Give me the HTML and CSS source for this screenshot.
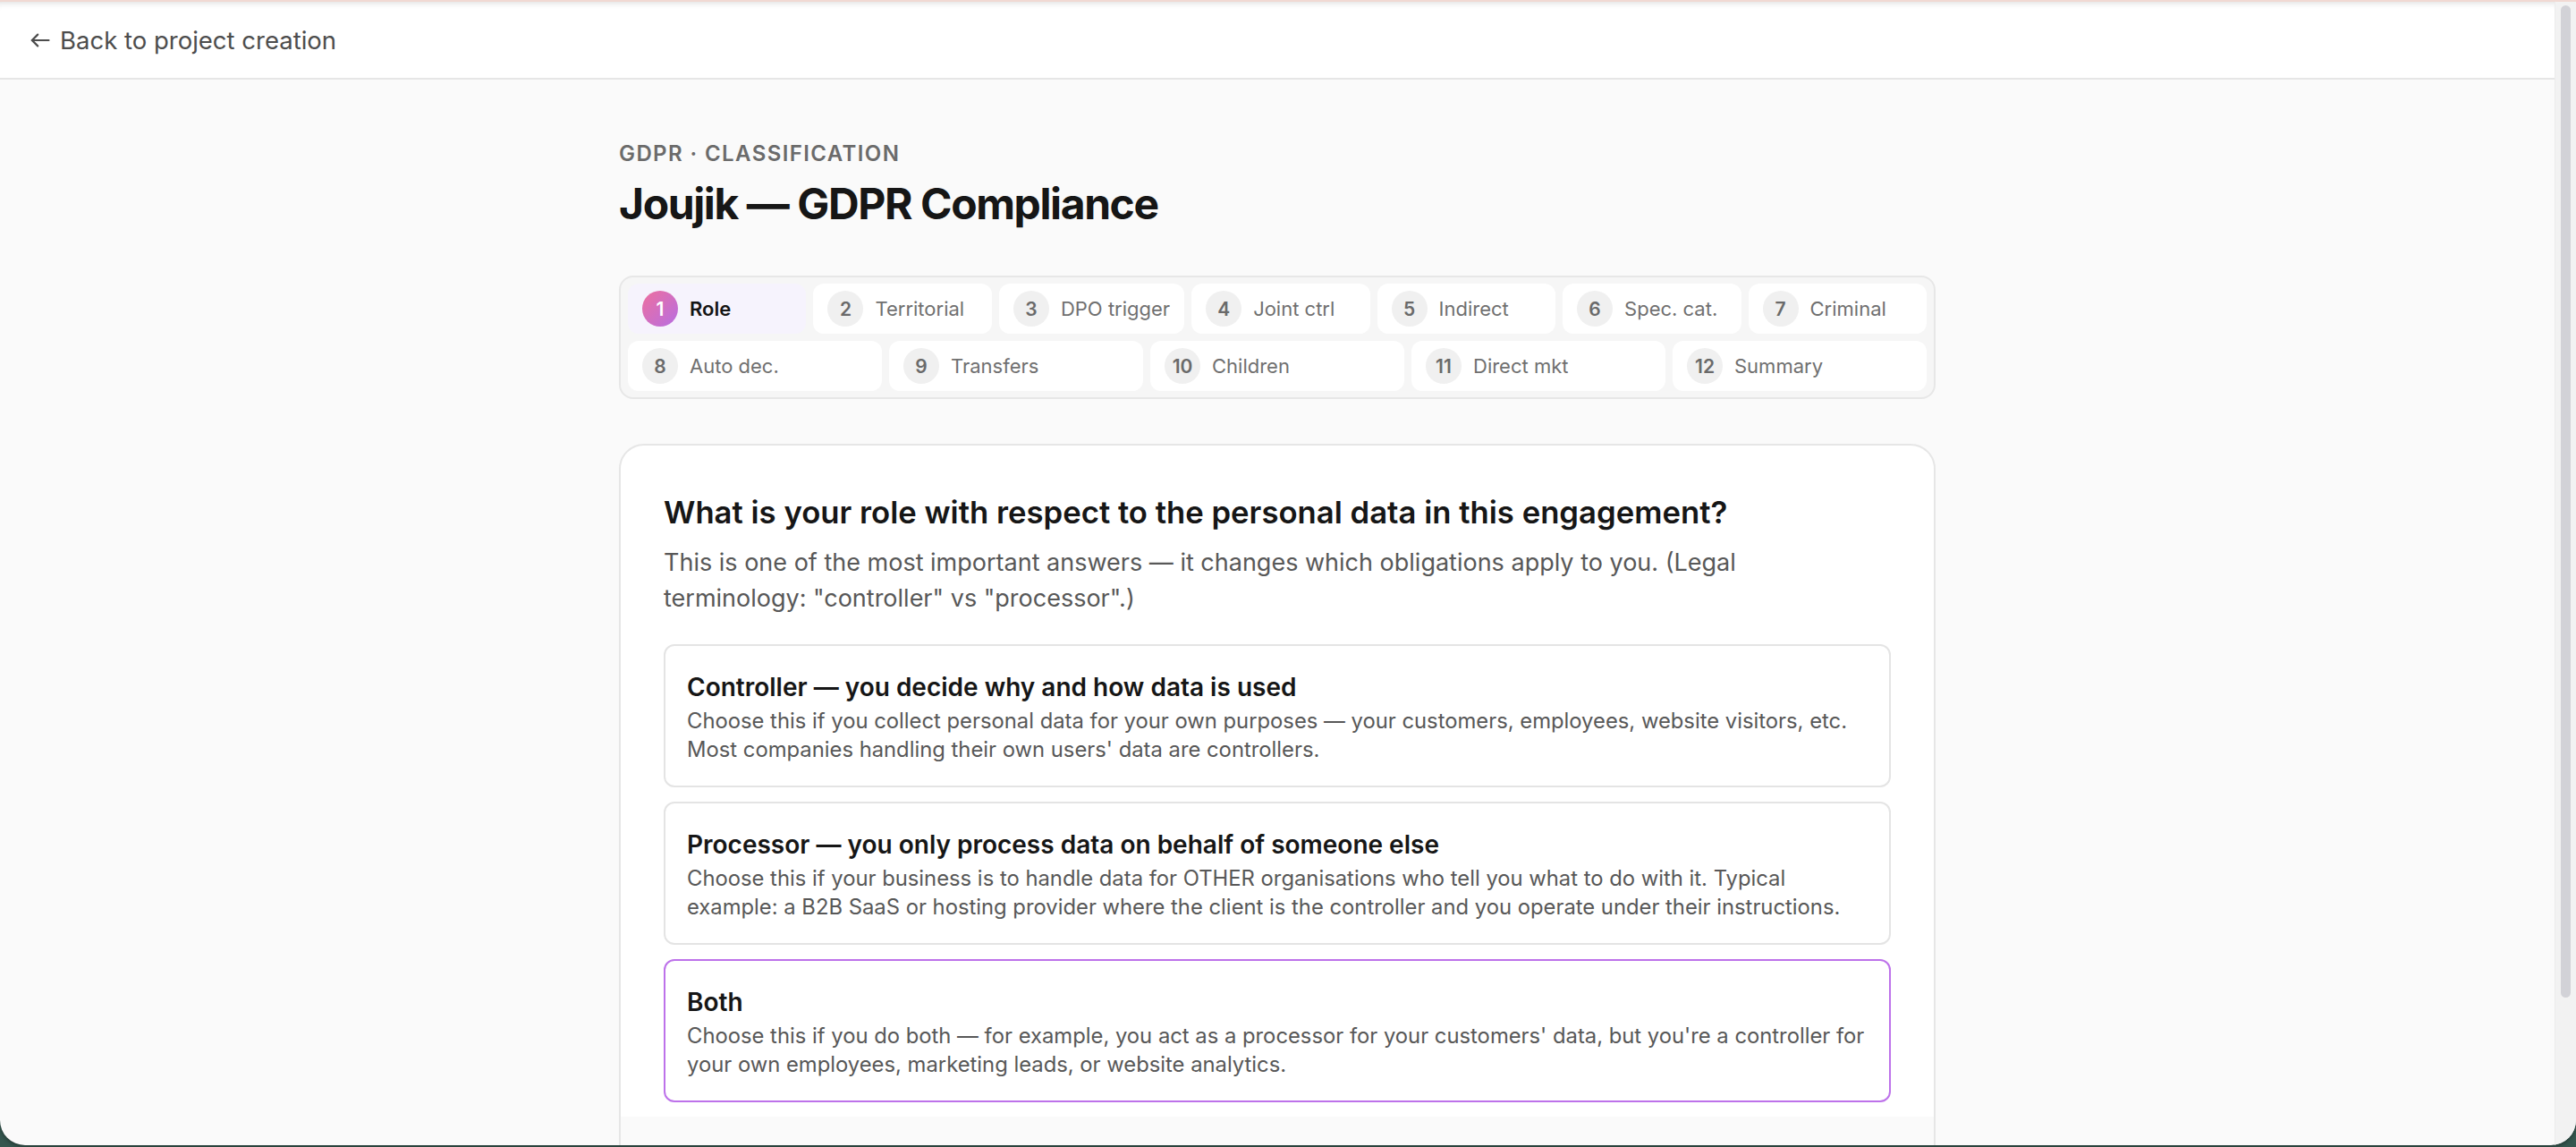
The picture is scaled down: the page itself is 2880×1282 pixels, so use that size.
FILE: index.html
```html
<!DOCTYPE html>
<html lang="en">
<head>
<meta charset="utf-8">
<title>Joujik — GDPR Compliance</title>
<link rel="stylesheet" href="styles.css">
</head>
<body>
<div class="window">
  <div class="viewport">
    <header class="topbar">
      <a class="back-link" href="#">
        <svg class="back-icon" width="22" height="16" viewBox="0 0 22 16" fill="none" stroke="currentColor" stroke-width="2.2" stroke-linecap="round" stroke-linejoin="round"><path d="M20.5 8H1.8"/><path d="M8.2 1.6 1.8 8l6.4 6.4"/></svg>
        <span>Back to project creation</span>
      </a>
    </header>
    <main class="page">
      <div class="eyebrow">GDPR · CLASSIFICATION</div>
      <h1 class="title">Joujik — GDPR Compliance</h1>

      <nav class="steps">
        <div class="step active"><span class="num">1</span><span class="label">Role</span></div>
        <div class="step"><span class="num">2</span><span class="label">Territorial</span></div>
        <div class="step"><span class="num">3</span><span class="label">DPO trigger</span></div>
        <div class="step"><span class="num">4</span><span class="label">Joint ctrl</span></div>
        <div class="step"><span class="num">5</span><span class="label">Indirect</span></div>
        <div class="step"><span class="num">6</span><span class="label">Spec. cat.</span></div>
        <div class="step"><span class="num">7</span><span class="label">Criminal</span></div>
        <div class="step"><span class="num">8</span><span class="label">Auto dec.</span></div>
        <div class="step"><span class="num">9</span><span class="label">Transfers</span></div>
        <div class="step"><span class="num">10</span><span class="label">Children</span></div>
        <div class="step"><span class="num">11</span><span class="label">Direct mkt</span></div>
        <div class="step"><span class="num">12</span><span class="label">Summary</span></div>
      </nav>

      <section class="card">
        <div class="card-body">
          <h2 class="question">What is your role with respect to the personal data in this engagement?</h2>
          <p class="hint">This is one of the most important answers — it changes which obligations apply to you. (Legal terminology: "controller" vs "processor".)</p>
          <div class="options">
            <div class="option">
              <div class="option-title">Controller — you decide why and how data is used</div>
              <div class="option-desc">Choose this if you collect personal data for your own purposes — your customers, employees, website visitors, etc. Most companies handling their own users' data are controllers.</div>
            </div>
            <div class="option">
              <div class="option-title">Processor — you only process data on behalf of someone else</div>
              <div class="option-desc">Choose this if your business is to handle data for OTHER organisations who tell you what to do with it. Typical example: a B2B SaaS or hosting provider where the client is the controller and you operate under their instructions.</div>
            </div>
            <div class="option selected">
              <div class="option-title">Both</div>
              <div class="option-desc">Choose this if you do both — for example, you act as a processor for your customers' data, but you're a controller for your own employees, marketing leads, or website analytics.</div>
            </div>
          </div>
        </div>
        <div class="card-footer">
          <button class="btn-next" type="button">Continue →</button>
        </div>
      </section>
    </main>
  </div>
  <div class="scrollbar"><div class="thumb"></div></div>
</div>
</body>
</html>
```

FILE: styles.css
```css
* { box-sizing: border-box; }

html, body {
  margin: 0;
  padding: 0;
  height: 100%;
  background: #35574f;
}

body {
  font-family: Inter, "Noto Sans", "Liberation Sans", sans-serif;
  color: #1a1a1a;
  overflow: hidden;
}

.window {
  display: flex;
  height: 1280px;
  overflow: hidden;
  background: #fafafa;
  border-radius: 0 0 28px 28px;
  border-top: 2px solid #f1d9d3;
  box-shadow: 0 2px 4px rgba(0,0,0,0.35);
}

.viewport {
  flex: 1;
  min-width: 0;
  overflow: hidden;
}

.scrollbar {
  flex: none;
  width: 24px;
  padding: 4px 6px;
  background: #f2f2f2;
  border-left: 1px solid #ececec;
}

.thumb {
  height: 1109px;
  border-radius: 6px;
  background: #d2d2d7;
}

.topbar {
  height: 87px;
  background: #ffffff;
  border-bottom: 2px solid #e6e6e6;
  display: flex;
  align-items: center;
  padding: 0 34px;
  box-shadow: inset 0 8px 8px -8px rgba(0,0,0,0.18);
}

.back-link {
  display: flex;
  align-items: center;
  gap: 11px;
  color: #4d4d4d;
  text-decoration: none;
  font-size: 27.5px;
  line-height: 40px;
}

.back-icon { display: block; }

.page {
  width: 1472px;
  margin: 0 auto;
  padding: 67px 0 72px;
}

.eyebrow {
  font-size: 24px;
  line-height: 32px;
  font-weight: 600;
  letter-spacing: 1.4px;
  color: #6b6b6b;
}

.title {
  margin: 11px 0 51px;
  font-size: 48px;
  line-height: 58px;
  font-weight: 700;
  letter-spacing: -1.4px;
  color: #161616;
}

.steps {
  display: flex;
  flex-wrap: wrap;
  gap: 8px;
  padding: 7px 8px;
  background: #f6f6f6;
  border: 2px solid #e7e7e7;
  border-radius: 16px;
}

.step {
  flex: 1 1 180px;
  display: flex;
  align-items: center;
  gap: 13px;
  height: 56px;
  padding: 0 16px;
  background: #ffffff;
  border-radius: 12px;
  white-space: nowrap;
}

.num {
  flex: none;
  width: 40px;
  height: 40px;
  border-radius: 50%;
  background: #f0f0f0;
  color: #6a6a6a;
  font-size: 21px;
  font-weight: 600;
  display: flex;
  align-items: center;
  justify-content: center;
}

.label {
  font-size: 22px;
  color: #707070;
}

.step.active { background: #f6f3fd; }
.step.active .num {
  background: linear-gradient(135deg, #ee6f9e 0%, #b76ee2 100%);
  color: #ffffff;
}
.step.active .label {
  color: #141414;
  font-weight: 600;
}

.card {
  margin-top: 50px;
  background: #ffffff;
  border: 2px solid #e6e6e6;
  border-radius: 28px;
  overflow: hidden;
}

.card-body {
  padding: 52px 48px 16px;
}

.question {
  margin: 0;
  font-size: 34.7px;
  line-height: 44px;
  font-weight: 600;
  color: #161616;
}

.hint {
  max-width: 1290px;
  margin: 15px 0 31px;
  font-size: 27px;
  line-height: 40px;
  color: #585858;
}

.options {
  display: flex;
  flex-direction: column;
  gap: 16px;
}

.option {
  border: 2px solid #e4e4e4;
  border-radius: 12px;
  padding: 28px 12px 24px 24px;
  background: #ffffff;
}

.option.selected { border-color: #bd72ea; }

.option-title {
  font-size: 28px;
  line-height: 36px;
  font-weight: 600;
  color: #161616;
}

.option-desc {
  margin-top: 4px;
  font-size: 23.8px;
  line-height: 32px;
  color: #585858;
}

.card-footer {
  display: flex;
  justify-content: flex-end;
  padding: 32px 48px;
  background: #fafafa;
}

.btn-next {
  width: 228px;
  height: 80px;
  border: 2px solid #cfcfcf;
  border-radius: 14px;
  background: #f3f3f3;
  color: #8a8a8a;
  font-family: inherit;
  font-size: 28px;
  font-weight: 600;
}
```
